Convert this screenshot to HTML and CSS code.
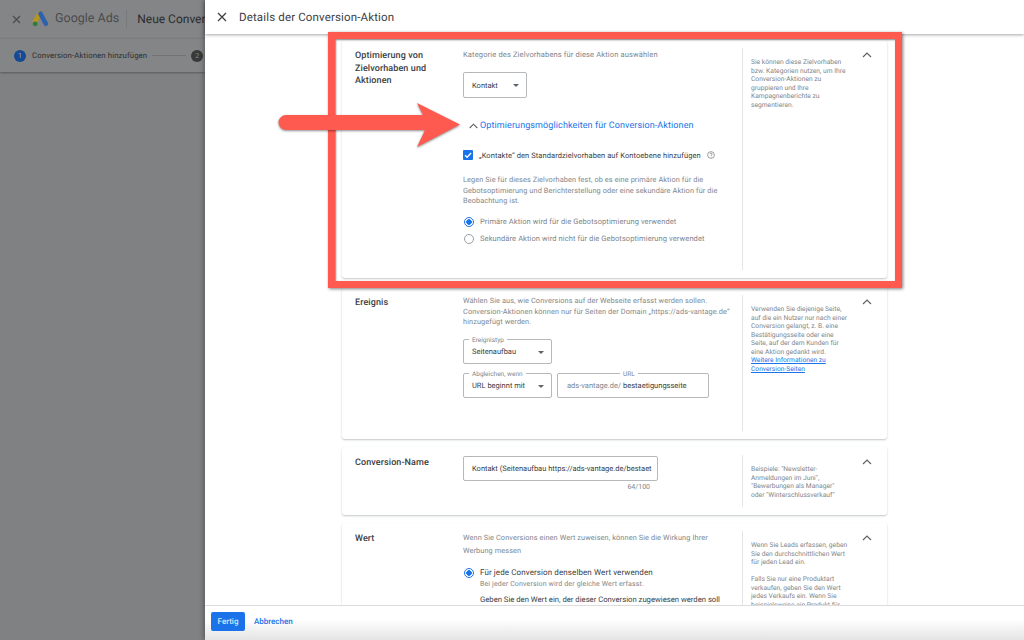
FILE: index.html
```html
<!DOCTYPE html>
<html lang="de">
<head>
  <meta charset="UTF-8" />
  <title>Details der Conversion-Aktion</title>
  <link rel="stylesheet" href="styles.css">
</head>
<body>
  <div class="behind">
    <div class="behind-top">
      <svg class="behind-close" width="9" height="9" viewBox="0 0 9 9"><path d="M1 1l7 7M8 1l-7 7"/></svg>
      <svg class="ads-logo" width="17" height="16" viewBox="0 0 17 16">
        <path d="M7.500 2.700L3 10.500" stroke="#b8951f" stroke-width="4.600" stroke-linecap="round"/>
        <path d="M8.500 2.700L13.800 12.800" stroke="#2f62ad" stroke-width="4.600" stroke-linecap="round"/>
        <circle cx="3.200" cy="12.800" r="2.400" fill="#2f7d3e"/>
      </svg>
      <span class="ads-name">Google Ads</span>
      <span class="behind-title">Neue Conversion-Aktion</span>
    </div>
    <div class="stepper">
      <span class="step-dot step-on">1</span>
      <span class="step-label">Conversion-Aktionen hinzufügen</span>
      <span class="step-line"></span>
      <span class="step-dot">2</span>
    </div>
  </div>

  <div class="panel">
    <div class="panel-head">
      <svg class="panel-close" width="10" height="10" viewBox="0 0 10 10"><path d="M1 1l8 8M9 1l-8 8"/></svg>
      <h1>Details der Conversion-Aktion</h1>
    </div>

    <div class="scroll">
      <section class="card card-goal">
        <h2>Optimierung von Zielvorhaben und Aktionen</h2>
        <div class="main">
          <p class="desc">Kategorie des Zielvorhabens für diese Aktion auswählen</p>
          <div class="box box-kontakt">
            <span>Kontakt</span>
            <i class="caret"></i>
          </div>
          <div class="expander">
            <svg width="9" height="6" viewBox="0 0 9 6"><path d="M.7 5L4.500 1.200 8.300 5"/></svg>
            <span>Optimierungsmöglichkeiten für Conversion-Aktionen</span>
          </div>
          <div class="check-row">
            <svg class="check" width="10" height="10" viewBox="0 0 10 10"><rect width="10" height="10" rx="1" fill="#1a73e8"/><path d="M2 5.200l2.100 2.100L8.100 3" fill="none" stroke="#fff" stroke-width="1.300"/></svg>
            <span>„Kontakte“ den Standardzielvorhaben auf Kontoebene hinzufügen</span>
            <svg class="hint" width="8" height="8" viewBox="0 0 8 8"><circle cx="4" cy="4" r="3.400" fill="none" stroke="#777" stroke-width=".7"/><path d="M2.900 3.100A1.100 1.100 0 1 1 4.400 4.200C4 4.400 4 4.600 4 5" fill="none" stroke="#777" stroke-width=".7"/><circle cx="4" cy="6" r=".4" fill="#777"/></svg>
          </div>
          <p class="para">Legen Sie für dieses Zielvorhaben fest, ob es eine primäre Aktion für die Gebotsoptimierung und Berichterstellung oder eine sekundäre Aktion für die Beobachtung ist.</p>
          <div class="radio-row"><i class="radio radio-on"></i><span>Primäre Aktion wird für die Gebotsoptimierung verwendet</span></div>
          <div class="radio-row"><i class="radio"></i><span>Sekundäre Aktion wird nicht für die Gebotsoptimierung verwendet</span></div>
        </div>
        <aside class="help">
          <p>Sie können diese Zielvorhaben bzw. Kategorien nutzen, um Ihre Conversion-Aktionen zu gruppieren und Ihre Kampagnenberichte zu segmentieren.</p>
          <svg class="chev" width="10" height="6" viewBox="0 0 10 6"><path d="M1 5l4-4 4 4"/></svg>
        </aside>
      </section>

      <section class="card card-event">
        <h2>Ereignis</h2>
        <div class="main">
          <p class="para para-event">Wählen Sie aus, wie Conversions auf der Webseite erfasst werden sollen. Conversion-Aktionen können nur für Seiten der Domain „https://ads-vantage.de“ hinzugefügt werden.</p>
          <div class="box box-field">
            <label>Ereignistyp</label>
            <span>Seitenaufbau</span>
            <i class="caret"></i>
          </div>
          <div class="field-row">
            <div class="box box-field">
              <label>Abgleichen, wenn</label>
              <span>URL beginnt mit</span>
              <i class="caret"></i>
            </div>
            <div class="box box-url">
              <label>URL</label>
              <span class="url-base">ads-vantage.de/</span><span class="url-path">bestaetigungsseite</span>
            </div>
          </div>
        </div>
        <aside class="help">
          <p>Verwenden Sie diejenige Seite, auf die ein Nutzer nur nach einer Conversion gelangt, z. B. eine Bestätigungsseite oder eine Seite, auf der dem Kunden für eine Aktion gedankt wird. <a href="#">Weitere Informationen zu Conversion-Seiten</a></p>
          <svg class="chev" width="10" height="6" viewBox="0 0 10 6"><path d="M1 5l4-4 4 4"/></svg>
        </aside>
      </section>

      <section class="card card-name">
        <h2>Conversion-Name</h2>
        <div class="main">
          <div class="box box-name"><span>Kontakt (Seitenaufbau https://ads-vantage.de/bestaet</span></div>
          <div class="counter">64/100</div>
        </div>
        <aside class="help">
          <p>Beispiele: "Newsletter-Anmeldungen im Juni", "Bewerbungen als Manager" oder "Winterschlussverkauf"</p>
          <svg class="chev" width="10" height="6" viewBox="0 0 10 6"><path d="M1 5l4-4 4 4"/></svg>
        </aside>
      </section>

      <section class="card card-value">
        <h2>Wert</h2>
        <div class="main">
          <p class="desc-wide">Wenn Sie Conversions einen Wert zuweisen, können Sie die Wirkung Ihrer Werbung messen</p>
          <div class="radio-row radio-dark"><i class="radio radio-on"></i><span>Für jede Conversion denselben Wert verwenden</span></div>
          <p class="sub">Bei jeder Conversion wird der gleiche Wert erfasst.</p>
          <p class="ask">Geben Sie den Wert ein, der dieser Conversion zugewiesen werden soll</p>
        </div>
        <aside class="help">
          <p>Wenn Sie Leads erfassen, geben Sie den durchschnittlichen Wert für jeden Lead ein.<br><br>Falls Sie nur eine Produktart verkaufen, geben Sie den Wert jedes Verkaufs ein. Wenn Sie beispielsweise ein Produkt für</p>
          <svg class="chev" width="10" height="6" viewBox="0 0 10 6"><path d="M1 5l4-4 4 4"/></svg>
        </aside>
      </section>
    </div>

    <div class="panel-foot">
      <button class="btn-done">Fertig</button>
      <a class="btn-cancel" href="#">Abbrechen</a>
    </div>
  </div>

  <!-- annotation drawn on top of the screenshot -->
  <div class="mark-box"></div>
  <svg class="mark-arrow" width="190" height="52" viewBox="0 0 190 52">
    <path d="M8 13H145L139 1 182 22.500 139 45 147 28H8A7.500 7.500 0 0 1 8 13Z"/>
  </svg>
</body>
</html>
```

FILE: styles.css
```css
* {
  margin: 0;
  padding: 0;
  box-sizing: border-box;
  font-family: 'Roboto', sans-serif;
  text-rendering: geometricPrecision;
}

body {
  display: flex;
  height: 640px;
  overflow: hidden;
  background: #808183;
}

/* page behind the drawer */
.behind {
  width: 205px;
  flex-shrink: 0;
  overflow: hidden;
  white-space: nowrap;
}

.behind-top {
  display: flex;
  align-items: center;
  height: 38px;
  padding-left: 12px;
  background: #848586;
}

.behind-top > * {
  flex-shrink: 0;
}

.behind-close {
  margin-right: 11px;
}

.behind-close path {
  fill: none;
  stroke: #4a4b4d;
  stroke-width: 1.2;
}

.ads-logo {
  margin-right: 6px;
}

.ads-name {
  font-size: 12.500px;
  color: #4b4c4e;
  padding-right: 7px;
  border-right: 1px solid #77787a;
  line-height: 18px;
}

.behind-title {
  font-size: 12px;
  color: #2b2c2e;
  margin-left: 10px;
}

.stepper {
  display: flex;
  align-items: center;
  height: 34px;
  padding-left: 14px;
  background: #848586;
  box-shadow: 0 1px 2px rgba(0, 0, 0, 0.3);
  border-top: 1px solid #7b7c7e;
}

.step-dot {
  width: 12px;
  height: 12px;
  flex-shrink: 0;
  border-radius: 50%;
  background: #38393b;
  color: #888;
  font-size: 7px;
  line-height: 12px;
  text-align: center;
}

.step-on {
  background: #174a94;
  color: #aaa;
}

.step-label {
  font-size: 7.800px;
  color: #2e2f31;
  margin-left: 6px;
  letter-spacing: 0.1px;
}

.step-line {
  width: 34px;
  height: 1px;
  background: #727375;
  margin: 0 5px;
}

/* drawer */
.panel {
  flex: 1;
  display: flex;
  flex-direction: column;
  background: #fff;
  box-shadow: -2px 0 4px rgba(0, 0, 0, 0.25);
  z-index: 1;
  min-width: 0;
}

.panel-head {
  display: flex;
  align-items: center;
  height: 34px;
  flex-shrink: 0;
  padding-left: 12px;
  background: #fff;
  box-shadow: 0 1px 3px rgba(0, 0, 0, 0.35);
  z-index: 1;
}

.panel-close {
  margin-right: 12px;
}

.panel-close path {
  fill: none;
  stroke: #3c4043;
  stroke-width: 1.300;
}

.panel-head h1 {
  font-size: 11.500px;
  font-weight: 400;
  color: #3c4043;
  letter-spacing: 0.15px;
}

.scroll {
  flex: 1;
  min-height: 0;
  overflow: hidden;
  padding: 6px 0 0 137px;
}

.card {
  display: grid;
  grid-template-columns: 121px 279px 145px;
  width: 545px;
  padding: 8px 0;
  margin-bottom: 8px;
  background: #fff;
  border-radius: 3px;
  box-shadow: 0 1px 2px rgba(60, 64, 67, 0.3);
}

.card-goal {
  height: 238px;
}

.card-event {
  height: 152px;
  margin-top: 9px;
}

.card-name {
  height: 68px;
}

.card-value {
  height: 240px;
}

.card h2 {
  padding: 2px 12px 0 13px;
  font-size: 9px;
  line-height: 12.700px;
  font-weight: 500;
  color: #3c4043;
  letter-spacing: 0.1px;
}

.main {
  min-width: 0;
}

.desc {
  margin-top: 2px;
  font-size: 7.500px;
  line-height: 10px;
  color: #80868b;
  letter-spacing: 0.15px;
}

.box {
  position: relative;
  display: flex;
  align-items: center;
  height: 25px;
  border: 1px solid #b6b9bc;
  border-radius: 2px;
  background: #fff;
  font-size: 7.500px;
  color: #3c4043;
  padding-left: 8px;
  white-space: nowrap;
}

.box label {
  position: absolute;
  top: -4px;
  left: 5px;
  padding: 0 3px;
  background: #fff;
  font-size: 6.500px;
  line-height: 8px;
  color: #80868b;
}

.caret {
  position: absolute;
  right: 7px;
  top: 11px;
  border-left: 3px solid transparent;
  border-right: 3px solid transparent;
  border-top: 3px solid #5f6368;
}

.box-kontakt {
  width: 64px;
  height: 26px;
  margin-top: 12px;
}

.box-field {
  width: 89px;
}

.field-row {
  display: flex;
  gap: 5px;
  margin-top: 9px;
}

.box-url {
  width: 152px;
  padding-left: 9px;
}

.box-url label {
  left: 62px;
}

.url-base {
  color: #80868b;
  margin-right: 2px;
}

.url-path {
  color: #3c4043;
}

.expander {
  display: flex;
  align-items: center;
  gap: 2px;
  margin: 21px 0 0 6px;
  height: 14px;
  font-size: 9px;
  color: #1a73e8;
  letter-spacing: 0.1px;
}

.expander svg path {
  fill: none;
  stroke: #5f6368;
  stroke-width: 1.100;
}

.check-row {
  display: flex;
  align-items: center;
  margin-top: 17px;
  height: 10px;
  font-size: 7.500px;
  color: #3c4043;
  letter-spacing: 0.08px;
}

.check {
  margin-right: 6px;
}

.hint {
  margin-left: 6px;
}

.para {
  margin-top: 15px;
  font-size: 7.350px;
  line-height: 10.700px;
  color: #80868b;
  letter-spacing: 0.1px;
  width: 278px;
}

.para-event {
  margin-top: 1px;
  margin-bottom: 11px;
  width: 275px;
}

.radio-row {
  display: flex;
  align-items: center;
  gap: 6px;
  height: 11px;
  margin-top: 6px;
  font-size: 7.500px;
  color: #80868b;
  letter-spacing: 0.1px;
}

.para + .radio-row {
  margin-top: 9px;
}

.radio {
  width: 10px;
  height: 10px;
  margin-left: 1px;
  flex-shrink: 0;
  border: 1px solid #9aa0a6;
  border-radius: 50%;
}

.radio-on {
  border-color: #1a73e8;
  background: radial-gradient(circle, #1a73e8 0 2.500px, #fff 3px);
}

.radio-dark {
  margin-top: 10px;
  font-size: 8px;
  color: #3c4043;
}

.box-name {
  width: 195px;
  height: 25px;
  margin-top: 1px;
  overflow: hidden;
}

.counter {
  width: 187px;
  margin-top: 1px;
  font-size: 7px;
  line-height: 10px;
  color: #80868b;
  text-align: right;
}

.desc-wide {
  font-size: 7.350px;
  line-height: 13px;
  color: #80868b;
  letter-spacing: 0.1px;
  width: 260px;
}

.sub {
  margin: 2px 0 0 17px;
  font-size: 7px;
  line-height: 9px;
  color: #80868b;
  letter-spacing: 0.15px;
}

.ask {
  margin: 5px 0 0 17px;
  font-size: 7.700px;
  line-height: 11px;
  color: #3c4043;
  white-space: nowrap;
}

.help {
  display: flex;
  align-items: flex-start;
  border-left: 1px solid #e4e5e6;
  padding-left: 8px;
  min-height: 0;
  overflow: hidden;
}

.help p {
  width: 98px;
  flex-shrink: 0;
  padding-top: 10px;
  font-size: 6.700px;
  line-height: 8.500px;
  color: #80868b;
}

.help a {
  display: block;
  color: #1a73e8;
}

.chev {
  margin: 4px 0 0 13px;
}

.chev path {
  fill: none;
  stroke: #5f6368;
  stroke-width: 1.200;
}

.panel-foot {
  display: flex;
  align-items: center;
  gap: 9px;
  height: 35px;
  flex-shrink: 0;
  padding: 0 0 3px 6px;
  border-top: 1px solid #dcdcdc;
  background: linear-gradient(#fff 40%, #e4e4e4);
  z-index: 1;
}

.btn-done {
  width: 34px;
  height: 19px;
  border: none;
  border-radius: 2px;
  background: #1a73e8;
  color: #d8e6fb;
  font-size: 8px;
  font-weight: 500;
}

.btn-cancel {
  font-size: 8px;
  font-weight: 500;
  color: #1a73e8;
  text-decoration: none;
}

/* red annotation on top */
.mark-box {
  position: absolute;
  left: 328px;
  top: 32px;
  width: 574px;
  height: 256px;
  border: 7px solid #ff5a4f;
  box-shadow: 1px 1px 3px rgba(0, 0, 0, 0.5), inset 1px 1px 2px rgba(0, 0, 0, 0.5);
  z-index: 2;
}

.mark-arrow {
  position: absolute;
  left: 278px;
  top: 102px;
  z-index: 3;
  filter: drop-shadow(0 1px 1px rgba(0, 0, 0, 0.45));
}

.mark-arrow path {
  fill: #ff5a4f;
}
```
